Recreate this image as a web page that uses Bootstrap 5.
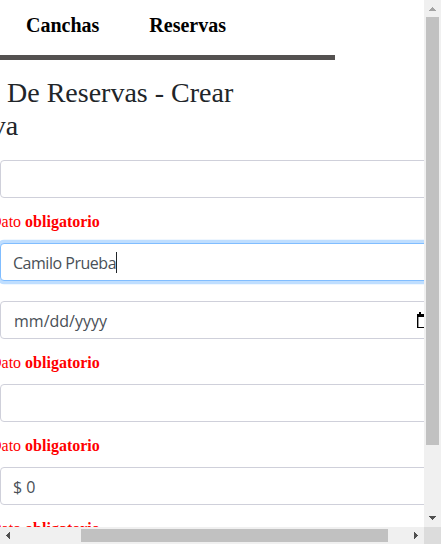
<!DOCTYPE html>
<html lang="es">
<head>
<meta charset="utf-8">
<meta name="viewport" content="width=device-width, initial-scale=1">
<title>Reservas</title>
<link rel="stylesheet" href="https://cdn.jsdelivr.net/npm/bootstrap@5.3.0/dist/css/bootstrap.min.css">
<style>
body{font-family:"Liberation Serif",serif;color:#212529;background:#fff}
.viewport{width:424px;height:527px}
.topnav{height:55px;padding:11px 0 0 26px;gap:50px}
.topnav a{font-size:20px;line-height:28px;font-weight:700;color:#000;text-decoration:none;white-space:nowrap}
.rule{width:335px;height:5px;background:#545150}
.title{font-size:28px;line-height:33px;font-weight:400;margin:16px 0 18px;white-space:nowrap}
.title span{display:block;margin-left:7px}
.title span + span{margin-left:-72px}
.field{width:500px;height:38px;border:1px solid #cfd0da;border-radius:4px;padding:2px 12px 0;font-family:"Open Sans","Noto Sans",sans-serif;font-size:16px;color:#495057;background:#fff;display:flex;align-items:center;flex:none}
.field.active-field{border-color:#80bdff;box-shadow:0 0 0 3.2px #bfdeff;margin-bottom:20px}
.name-text{display:inline-block;letter-spacing:-.48px}
.caret{width:1px;height:21px;background:#212529;margin-top:-2px}
.date-text{width:95px;padding-left:1px;letter-spacing:0}
.date-icon{margin:-1px 0 0 309px}
.error{height:45px;padding-top:12px;line-height:24px;font-size:16px;color:red;margin-left:-10px;white-space:nowrap}
.vbar{width:17px;height:527px;background:#f0f0f0}
.vbar .thumb{width:13px;height:428px;background:#c1c1c1}
.hbar{width:424px;height:17px;background:#f0f0f0}
.hbar .thumb{width:307px;height:13px;background:#c1c1c1}
.corner{width:17px;height:17px;background:#dcdcdc}
svg{display:block;flex:none}
</style>
<script src="https://cdn.jsdelivr.net/npm/bootstrap@5.3.0/dist/js/bootstrap.bundle.min.js"></script>
</head>
<body class="overflow-hidden">
<div class="d-flex">
<main class="viewport overflow-hidden">
  <nav class="topnav d-flex align-items-start"><a href="#">Canchas</a><a href="#">Reservas</a></nav>
  <div class="rule"></div>
  <h1 class="title"><span>De Reservas - Crear</span><span>Reserva</span></h1>
  <div class="field"></div>
  <div class="error">Dato <b>obligatorio</b></div>
  <div class="field active-field"><span class="name-text">Camilo Prueba</span><span class="caret"></span></div>
  <div class="field"><span class="date-text">mm/dd/yyyy</span>
    <svg class="date-icon" width="14" height="17" viewBox="0 0 14 17" shape-rendering="crispEdges"><path d="M0 2h2V0h2v2h6V0h2v2h2v14H0zM1 5v10h12V5z" fill="#000" fill-rule="evenodd"/><path d="M1 5h1v10H1z" fill="#999"/></svg></div>
  <div class="error">Dato <b>obligatorio</b></div>
  <div class="field"></div>
  <div class="error">Dato <b>obligatorio</b></div>
  <div class="field"><span>$ 0</span></div>
  <div class="error">Dato <b>obligatorio</b></div>
</main>
<div class="vbar d-flex flex-column align-items-center">
  <svg width="17" height="17" shape-rendering="crispEdges"><path d="M8 7h1v1h1v1h1v1h1v1H5v-1h1V9h1V8h1z" fill="#a3a3a3"/></svg>
  <div class="thumb"></div>
  <svg class="mt-auto" width="17" height="17" shape-rendering="crispEdges"><path d="M5 6h7v1h-1v1h-1v1H9v1H8V9H7V8H6V7H5z" fill="#505050"/></svg>
</div>
</div>
<div class="d-flex">
<div class="hbar d-flex align-items-center">
  <svg width="81" height="17" shape-rendering="crispEdges"><path d="M10 5v7H9v-1H8v-1H7V9H6V8h1V7h1V6h1V5z" fill="#505050"/></svg>
  <div class="thumb"></div>
  <svg class="ms-auto" width="17" height="17" shape-rendering="crispEdges"><path d="M7 5v7h1v-1h1v-1h1V9h1V8h-1V7H9V6H8V5z" fill="#505050"/></svg>
</div>
<div class="corner"></div>
</div>
</body>
</html>
